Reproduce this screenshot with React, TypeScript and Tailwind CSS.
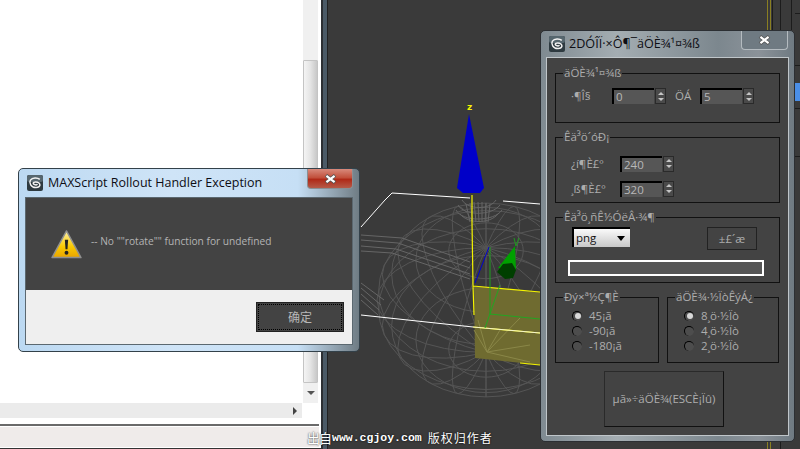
import type { ReactNode } from 'react';

const UI_FONT = 'font-["Open_Sans","Noto_Sans",sans-serif]';

// teapot body as a tilted wire sphere, viewport coords
const buildTeapot = () => {
  const cx = 486;
  const cy = 300;
  const rx = 109;
  const ry = 97;
  const tilt = 1.0;
  const project = (lat: number, lon: number) => {
    const x = Math.cos(lat) * Math.sin(lon);
    const z = Math.cos(lat) * Math.cos(lon);
    const y = Math.sin(lat) * Math.cos(tilt) + z * Math.sin(tilt);
    return { x: cx + rx * x, y: cy + ry * y };
  };
  let d = '';
  for (let j = 0; j < 20; j++) {
    const lon = (j / 20) * Math.PI * 2;
    for (let i = 0; i <= 16; i++) {
      const lat = -Math.PI / 2 + (i / 16) * Math.PI;
      const p = project(lat, lon);
      d += `${i === 0 ? 'M' : 'L'}${p.x.toFixed(1)} ${p.y.toFixed(1)}`;
    }
  }
  for (let i = 1; i < 9; i++) {
    const lat = -Math.PI / 2 + (i / 9) * Math.PI;
    for (let j = 0; j <= 40; j++) {
      const p = project(lat, (j / 40) * Math.PI * 2);
      d += `${j === 0 ? 'M' : 'L'}${p.x.toFixed(1)} ${p.y.toFixed(1)}`;
    }
  }
  return d;
};

const teapotPath = buildTeapot();

const Viewport = () => (
  <svg viewBox="328 0 472 449" className="block h-[449px] w-[472px]" fill="none">
    <path d={teapotPath} stroke="#555555" strokeWidth="1" />
    {/* spout and lid */}
    <path
      d="M361 235L402 238L470 262M361 240L398 243L470 268M361 246L396 249L470 274M361 251L392 253L470 279M361 283L384 300M361 288L381 305M361 294L379 310M361 300L378 315M456 210C462 222 494 222 502 210M458 205C464 216 492 216 500 205M462 200C468 210 490 210 496 200M460 214C468 224 490 224 498 214M466 204L470 222M470 203L473 222M474 202L476 222M478 202L479 222M482 202L482 222M486 203L485 222M490 204L488 222"
      stroke="#666666"
    />
    {/* selected face */}
    <path d="M474 286L540 292V365L475 358Z" fill="#6f6b30" />
    <path d="M487 352L474 330M487 352L500 330M487 352L530 345M487 352L530 362M487 352L520 318M487 352L478 320" stroke="#8a8748" />
    <path d="M472 195V222L473 285L474 315M473 286L540 292M473 327L540 333M520 363L540 365" stroke="#f4f400" strokeWidth="1.2" />
    {/* bounding box */}
    <path d="M361 227L385 200L392 193L470 198M503 201L540 204M361 315L473 327" stroke="#ffffff" strokeWidth="1" />
    <path d="M473 327L540 333" stroke="#f3f3d0" />
    {/* gizmo */}
    <path d="M469 114L457 188L463 193L480 193L484 188Z" fill="#0000c8" />
    <text x="467" y="110" fill="#f4f400" fontSize="9" fontFamily="DejaVu Sans, sans-serif" fontWeight="700">z</text>
    <path d="M490 247V315" stroke="#1fa01f" />
    <path d="M489 247L475 283" stroke="#0000d0" />
    <path d="M490 314L540 319M500 285L485 328" stroke="#22a622" />
    <path d="M515 246L498 268L516 270Z" fill="#00a000" />
    <path d="M503 264L512 263L516 270L513 278L505 279L497 272Z" fill="#003f00" />
    <path d="M514 238L516 246L519 238" stroke="#1e9a1e" />
    {/* grid lines behind the render dialog */}
    <path d="M767.5 0V30M770.5 0V30M767.5 441V449M770.5 441V449" stroke="#8a7f22" />
    <path d="M780.5 0V30M791.5 0V30M772.5 0V30M780.5 441V449M795 13.5H800M795 65.5H800M795 108.5H800M795 156.5H800" stroke="#1c1c1c" />
    <rect x="795" y="83" width="5" height="18" fill="#4a8fe8" />
  </svg>
);

const LeftPane = () => (
  <div className="flex h-[449px] w-[328px] shrink-0">
    <div className="flex w-[321px] flex-col bg-white">
      <div className="flex h-[403px]">
        <div className="w-[303px]" />
        <div className="flex w-[15px] flex-col bg-[#f0f0f0]">
          <div className="h-[60px]" />
          <div className="h-[323px] rounded-[1px] border border-[#c4c4c4] bg-linear-to-r from-[#f4f4f4] via-[#e4e4e4] to-[#c8c8c8]" />
          <div className="flex flex-1 items-center justify-center">
            <div className="h-0 w-0 border-x-[4px] border-t-[4px] border-x-transparent border-t-[#555]" />
          </div>
        </div>
      </div>
      <div className="flex h-[15px] w-[302px] items-center justify-end bg-[#ebebeb] pr-[5px]">
        <div className="h-0 w-0 border-y-[4px] border-l-[4px] border-y-transparent border-l-[#444]" />
      </div>
      <div className="mt-[6px] h-[2px] w-[319px] bg-[#6a6a6a]" />
      <div className="mt-[1px] h-[20px] w-[319px] bg-[#efebea]" />
      <div className="h-[1px] bg-white" />
      <div className="h-[1px] bg-[#333]" />
    </div>
    <div className="w-[2px] bg-[#2c2f33]" />
    <div className="w-[4px] bg-[#4b5a66]" />
    <div className="w-[1px] bg-[#222]" />
  </div>
);

// 3ds Max style icon
const MaxIcon = () => (
  <svg viewBox="0 0 16 16" className="h-4 w-4 shrink-0">
    <rect width="16" height="16" rx="2" fill="#2e3a40" />
    <rect width="16" height="7" rx="2" fill="#56666e" />
    <path
      d="M12.8 4.4C10.6 2.4 5.4 2.2 3.4 5.2C1.8 7.8 4 12.4 8.6 12.6C11.6 12.8 13.4 11 12.8 9.2C12.2 7.4 9 6.6 6.8 7.4C5.8 7.8 6.2 9.4 8.2 9.8C9.2 10 10.2 9.6 10.4 9.2"
      fill="none"
      stroke="#f2f2f2"
      strokeWidth="1.5"
    />
  </svg>
);

const CloseGlyph = () => (
  <svg viewBox="0 0 14 11" className="h-[10px] w-[13px]">
    <path d="M2 1.5L12 9.5M12 1.5L2 9.5" stroke="#555" strokeWidth="4" />
    <path d="M2.5 2L11.5 9M11.5 2L2.5 9" stroke="#fff" strokeWidth="2.4" />
  </svg>
);

const WarningIcon = () => (
  <svg viewBox="0 0 32 30" className="mt-[6px] h-[29px] w-[31px] shrink-0">
    <defs>
      <linearGradient id="warn" x1="0" y1="0" x2="0" y2="1">
        <stop offset="0" stopColor="#fff2a8" />
        <stop offset="0.6" stopColor="#f9c800" />
        <stop offset="1" stopColor="#e9a400" />
      </linearGradient>
    </defs>
    <path d="M16 1L31 28.5H1Z" fill="url(#warn)" stroke="#8f8f8f" strokeWidth="1.5" strokeLinejoin="round" />
    <path d="M14.3 10H17.7L17 20H15Z" fill="#222" />
    <circle cx="16" cy="23.5" r="2" fill="#222" />
  </svg>
);

const ErrorDialog = () => (
  <div className={`absolute top-[168px] left-[18px] flex h-[184px] w-[342px] flex-col rounded-[5px] border border-[#33414a] bg-[linear-gradient(90deg,#bcd9f2_0%,#cfe4f7_45%,#c6dff5_82%,#6f7c84_100%)] px-[6px] pb-[6px] ${UI_FONT}`}>
    <div className="flex h-[28px] shrink-0 items-center gap-[5px] pl-[2px]">
      <MaxIcon />
      <span className="text-[12.5px] whitespace-nowrap text-[#0d0d14]">MAXScript Rollout Handler Exception</span>
    </div>
    <div className="absolute top-0 right-[6px] flex h-[20px] w-[46px] items-center justify-center rounded-b-[4px] border border-t-0 border-[#8a8f93] bg-[linear-gradient(180deg,#d88a7c_0%,#c2503c_45%,#b02a18_55%,#b55a48_100%)]">
      <CloseGlyph />
    </div>
    <div className="flex flex-1 flex-col border border-[#5b6870]">
      <div className="flex h-[92px] items-center gap-[9px] bg-[#434343] pb-[5px] pl-[25px]">
        <WarningIcon />
        <span className="text-[10.2px] whitespace-nowrap text-[#b4b4b4]">-- No ""rotate"" function for undefined</span>
      </div>
      <div className="flex flex-1 items-start justify-end bg-[#efefef] pt-[12px] pr-[8px]">
        <div className="flex h-[30px] w-[88px] items-center justify-center border border-[#222] bg-[#434343] outline-1 -outline-offset-3 outline-black outline-dotted">
          <span className='font-["Noto_Sans_CJK_SC",sans-serif] text-[12px] text-[#b8b8b8]'>确定</span>
        </div>
      </div>
    </div>
  </div>
);

const GroupBox = ({
  label,
  className,
  children,
}: {
  label: string;
  className: string;
  children?: ReactNode;
}) => (
  <div className={`relative border border-[#111] ${className}`}>
    <span className="absolute -top-[8px] left-[7px] bg-[#434343] px-[1px] text-[11.5px] leading-[14px] whitespace-nowrap text-[#adadad]">
      {label}
    </span>
    {children}
  </div>
);

const Spinner = ({ value }: { value: string }) => (
  <div className="flex items-center gap-[1px]">
    <div className="flex h-[16px] w-[42px] items-center border-t-2 border-l-2 border-black bg-[#565656] pl-[2px] text-[11.5px] text-[#b8b8b8]">
      {value}
    </div>
    <div className="flex h-[16px] w-[11px] flex-col items-center justify-center gap-[3px] border border-[#2a2a2a] bg-[#4a4a4a]">
      <div className="h-0 w-0 border-x-[3px] border-b-[3px] border-x-transparent border-b-[#c4c4c4]" />
      <div className="h-0 w-0 border-x-[3px] border-t-[3px] border-x-transparent border-t-[#c4c4c4]" />
    </div>
  </div>
);

const Radio = ({ label, checked }: { label: string; checked?: boolean }) => (
  <div className="flex h-[15px] items-center gap-[7px] text-[11.5px] whitespace-nowrap text-[#adadad]">
    <div className="flex h-[10px] w-[10px] items-center justify-center rounded-full border-t border-l border-black bg-[#4d4d4d]">
      {checked && <div className="h-[6px] w-[6px] rounded-full bg-[#d8d8d8]" />}
    </div>
    {label}
  </div>
);

const FieldRow = ({ label, value }: { label: string; value: string }) => (
  <div className="flex items-center text-[11.5px] text-[#adadad]">
    <span className="w-[49px] whitespace-nowrap">{label}</span>
    <Spinner value={value} />
  </div>
);

const RenderDialog = () => (
  <div className={`absolute top-[30px] left-[540px] flex h-[412px] w-[255px] flex-col rounded-[5px] border border-[#2c2f33] bg-[linear-gradient(90deg,#7f8a91_0%,#a4adb2_30%,#7c878e_70%,#8b9299_86%,#6f7a82_100%)] px-[5px] pb-[5px] ${UI_FONT}`}>
    <div className="flex h-[26px] shrink-0 items-center gap-[4px] pl-[3px]">
      <MaxIcon />
      <span className="text-[12.6px] whitespace-nowrap text-[#0e0e14]">2DÓÎÏ·×Ô¶¯äÖÈ¾¹¤¾ß</span>
    </div>
    <div className="absolute top-0 right-[6px] flex h-[19px] w-[47px] items-center justify-center rounded-b-[4px] border border-t-0 border-[#b4bbc0] bg-[#6f7a82]">
      <CloseGlyph />
    </div>
    <div className="flex flex-1 flex-col border border-[#c0c6ca] bg-[#434343] px-[8px] pt-[15px]">
      <GroupBox label="äÖÈ¾¹¤¾ß" className="flex h-[50px] items-center pb-[4px] pl-[15px] text-[11.5px] text-[#adadad]">
        <span className="w-[41px] whitespace-nowrap">·¶Î§</span>
        <Spinner value="0" />
        <span className="ml-[9px] w-[25px]">ÖÁ</span>
        <Spinner value="5" />
      </GroupBox>
      <GroupBox label="Êä³ö´óÐ¡" className="mt-[14px] flex h-[66px] flex-col gap-[8px] pt-[17px] pl-[15px]">
        <FieldRow label="¿í¶È£º" value="240" />
        <FieldRow label="¸ß¶È£º" value="320" />
      </GroupBox>
      <GroupBox label="Êä³ö¸ñÊ½ÓëÂ·¾¶" className="mt-[14px] h-[66px] pt-[9px] pl-[16px]">
        <div className="flex items-start">
          <div className="flex h-[20px] w-[58px] items-center justify-between border-t-2 border-l-2 border-black bg-linear-to-b from-[#fafafa] to-[#c8c8c8] px-[2px] text-[11.5px] text-[#111]">
            png
            <div className="mr-[3px] h-0 w-0 border-x-[4px] border-t-[5px] border-x-transparent border-t-black" />
          </div>
          <div className="ml-[77px] flex h-[23px] w-[50px] items-center justify-center border border-[#222] text-[11.5px] text-[#adadad]">
            ±£´æ
          </div>
        </div>
        <div className="mt-[10px] -ml-[4px] h-[16px] w-[196px] border-2 border-white bg-[#565656]" />
      </GroupBox>
      <div className="mt-[14px] flex gap-[8px]">
        <GroupBox label="Ðý×ª½Ç¶È" className="flex h-[66px] w-[104px] flex-col pt-[10px] pl-[16px]">
          <Radio label="45¡ã" checked />
          <Radio label="-90¡ã" />
          <Radio label="-180¡ã" />
        </GroupBox>
        <GroupBox label="äÖÈ¾·½ÏòÊýÁ¿" className="flex h-[66px] w-[112px] flex-col pt-[10px] pl-[16px]">
          <Radio label="8¸ö·½Ïò" checked />
          <Radio label="4¸ö·½Ïò" />
          <Radio label="2¸ö·½Ïò" />
        </GroupBox>
      </div>
      <div className="mt-[8px] ml-[49px] flex h-[56px] w-[120px] items-center justify-center border border-[#2a2a2a] border-r-[#111] border-b-[#111] bg-[#434343] text-[11.5px] whitespace-nowrap text-[#adadad]">
        µã»÷äÖÈ¾(ESCÈ¡Ïû)
      </div>
    </div>
  </div>
);

const App = () => (
  <div className="relative flex h-[449px] w-[800px] overflow-hidden bg-[#3a3a3a]">
    <LeftPane />
    <Viewport />
    <ErrorDialog />
    <RenderDialog />
    <div className='absolute top-[429px] left-[307px] flex items-center text-[13px] leading-[18px] whitespace-nowrap text-white [text-shadow:0_0_2px_#000] font-["Noto_Sans_CJK_SC",sans-serif]'>
      <span className="w-[25px] tracking-[-1px]">出自</span>
      <span className='font-["Liberation_Mono",monospace] text-[11.5px] font-bold'>www.cgjoy.com</span>
      <span className="ml-[6px] text-[12px] tracking-[1px]">版权归作者</span>
    </div>
  </div>
);

export default App;
